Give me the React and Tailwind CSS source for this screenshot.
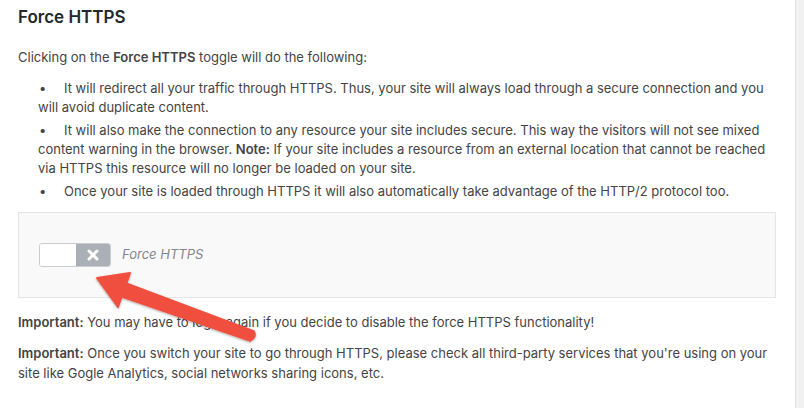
import { X } from "lucide-react";

const bullets = [
  <>It will redirect all your traffic through HTTPS. Thus, your site will always load through a secure connection and you will avoid duplicate content.</>,
  <>
    It will also make the connection to any resource your site includes secure. This way the visitors will not see mixed
    content warning in the browser. <b className="font-semibold">Note:</b> If your site includes a resource from an external
    location that cannot be reached via HTTPS this resource will no longer be loaded on your site.
  </>,
  <>Once your site is loaded through HTTPS it will also automatically take advantage of the HTTP/2 protocol too.</>,
];

function Arrow() {
  return (
    <svg className="pointer-events-none absolute left-0 top-0" width="804" height="408" viewBox="0 0 804 408">
      <defs>
        <filter id="arrow-shadow" x="-20%" y="-20%" width="140%" height="140%">
          <feDropShadow dx="0" dy="1" stdDeviation="1.2" floodColor="#000" floodOpacity="0.35" />
        </filter>
      </defs>
      <path
        d="M97 278 L130 273 L126.4 283.4 L253.7 331.3 Q257 337 250.3 340.7 L121.6 296.6 L118 307 Z"
        fill="#f0503f"
        stroke="#f0503f"
        strokeWidth="2"
        strokeLinejoin="round"
        filter="url(#arrow-shadow)"
      />
    </svg>
  );
}

export default function App() {
  return (
    <div className="relative flex h-[408px] w-[804px] overflow-hidden bg-white font-['Inter','Noto_Sans',sans-serif] text-[13px] text-[#444]">
      <div className="w-[795px] pl-[18px] pr-[20px] pt-[6px]">
        <h2 className="text-[17px] font-semibold leading-[22px] text-[#23282d]">Force HTTPS</h2>

        <p className="mt-[20px] leading-[19px]">
          Clicking on the <b className="font-semibold">Force HTTPS</b> toggle will do the following:
        </p>

        <ul className="mt-[12px] pl-[20px]">
          {bullets.map((item, i) => (
            <li key={i} className="mb-[4px] leading-[19px]">
              <span className="inline-block w-[26px] pl-[1px]">•</span>
              {item}
            </li>
          ))}
        </ul>

        <div className="mt-[11px] flex h-[86px] w-[758px] items-center gap-[11px] border border-[#e5e5e5] bg-[#f9f9f9] pl-[20px]">
          <div className="flex h-[24px] w-[72px] overflow-hidden rounded-[3px] border border-[#c9ccd0]">
            <div className="w-[36px] bg-white" />
            <div className="flex flex-1 items-center justify-center bg-[#aab0b5]">
              <X size={16} strokeWidth={4.5} className="text-white" />
            </div>
          </div>
          <span className="italic text-[#82878c]">Force HTTPS</span>
        </div>

        <p className="mt-[15px] leading-[19px]">
          <b className="font-semibold">Important:</b> You may have to login again if you decide to disable the force HTTPS
          functionality!
        </p>
        <p className="mt-[11px] leading-[20px]">
          <b className="font-semibold">Important:</b> Once you switch your site to go through HTTPS, please check all
          third-party services that you're using on your site like Gogle Analytics, social networks sharing icons, etc.
        </p>
      </div>
      <div className="flex-1 border-l border-[#e2e2e2] bg-[#f1f1f1]" />
      <Arrow />
    </div>
  );
}
